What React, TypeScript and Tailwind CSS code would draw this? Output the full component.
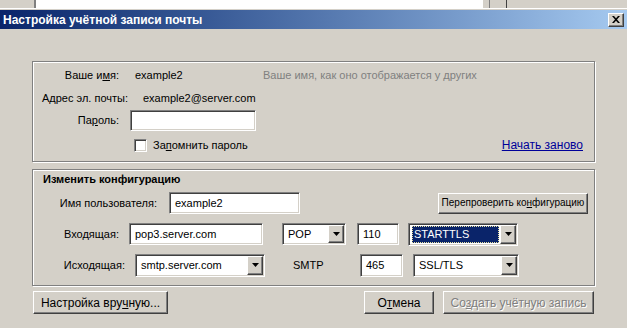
import React from "react";

// Win2000-style bevels
const sunken =
  "border border-t-[#808080] border-l-[#808080] border-b-white border-r-white shadow-[inset_1px_1px_0_#404040,inset_-1px_-1px_0_#d4d0c8] bg-white";
const raised =
  "border border-t-white border-l-white border-b-[#404040] border-r-[#404040] shadow-[inset_-1px_-1px_0_#808080,inset_1px_1px_0_#d4d0c8] bg-[#d4d0c8]";
const etched = "border border-[#808080] shadow-[inset_1px_1px_0_#fff,1px_1px_0_#fff]";

function Arrow() {
  return (
    <div className={`${raised} w-[16px] h-full flex items-center justify-center shrink-0`}>
      <svg width="7" height="4" viewBox="0 0 7 4">
        <path d="M0 0h7L3.5 4z" fill="#000" />
      </svg>
    </div>
  );
}

function Select({
  value,
  className,
  selected,
}: {
  value: string;
  className: string;
  selected?: boolean;
}) {
  return (
    <div className={`${sunken} ${className} flex items-stretch p-[1px]`}>
      <div className="flex-1 flex items-center pl-[2px] pr-[1px] min-w-0">
        {selected ? (
          <div className="w-full h-[17px] bg-[#0a246a] text-white flex items-center pl-[2px] outline outline-1 outline-dotted outline-[#e8e0a0] -outline-offset-1">
            {value}
          </div>
        ) : (
          <span className="pl-[2px]">{value}</span>
        )}
      </div>
      <Arrow />
    </div>
  );
}

function Input({ value, className }: { value?: string; className: string }) {
  return (
    <div className={`${sunken} ${className} flex items-center pl-[5px]`}>
      {value}
    </div>
  );
}

export default function App() {
  return (
    <div className="w-[627px] h-[328px] overflow-hidden bg-[#d4d0c8] font-['Liberation_Sans',Arial,sans-serif] text-[11px] text-black leading-none">
      {/* window behind */}
      <div className="h-[8px] flex">
        <div className="w-[34px]" />
        <div className="w-[2px] bg-[#808080]" />
        <div className="w-[447px] bg-white" />
        <div className="w-[6px]" />
        <div className="w-[1px] bg-[#808080]" />
        <div className="w-[16px]" />
        <div className="w-[1px] bg-[#404040]" />
      </div>
      <div className="h-[2px] border-t border-white" />

      {/* title bar */}
      <div className="h-[19px] flex items-center pl-[3px] pr-[3px] bg-linear-to-r from-[#0a246a] to-[#a6caf0]">
        <span className="text-white font-bold text-[12px]">Настройка учётной записи почты</span>
        <div className={`${raised} ml-auto w-[16px] h-[14px] flex items-center justify-center`}>
          <svg width="8" height="7" viewBox="0 0 8 7">
            <path d="M0 0h2l2 2.3L6 0h2L5 3.5 8 7H6L4 4.7 2 7H0l3-3.5z" fill="#000" />
          </svg>
        </div>
      </div>

      {/* account box */}
      <div className={`${etched} mt-[32px] ml-[32px] w-[563px] h-[101px]`}>
        <div className="mt-[4px] h-[18px] flex items-center">
          <div className="w-[86px] text-right">
            Ваше и<u>м</u>я:
          </div>
          <div className="ml-[16px] w-[128px]">example2</div>
          <div className="text-[#808080]">Ваше имя, как оно отображается у других</div>
        </div>
        <div className="mt-[5px] h-[18px] flex items-center">
          <div className="w-[95px] text-right">
            А<u>д</u>рес эл. почты:
          </div>
          <div className="ml-[15px]">example2@server.com</div>
        </div>
        <div className="mt-[3px] h-[21px] flex items-center">
          <div className="w-[86px] text-right">
            Па<u>р</u>оль:
          </div>
          <Input className="ml-[11px] w-[126px] h-[21px]" />
        </div>
        <div className="mt-[6px] h-[16px] flex items-center">
          <div className={`${sunken} ml-[101px] w-[13px] h-[13px]`} />
          <div className="ml-[6px]">
            За<u>п</u>омнить пароль
          </div>
          <div className="ml-auto mr-[11px] text-[12px] text-[#000099] underline">Начать заново</div>
        </div>
      </div>

      {/* config box */}
      <div className={`${etched} mt-[7px] ml-[32px] w-[563px] h-[117px]`}>
        <div className="mt-[1px] h-[16px] flex items-center pl-[10px] font-bold">
          Изменить конфигурацию
        </div>
        <div className="mt-[5px] h-[22px] flex items-center">
          <div className="w-[124px] text-right">Имя пользователя:</div>
          <Input value="example2" className="ml-[12px] w-[131px] h-[22px]" />
          <div
            className={`${raised} ml-[138px] w-[150px] h-[21px] flex items-center justify-center whitespace-nowrap text-[10px]`}
          >
            <span>
              Перепроверить ко<u>н</u>фигурацию
            </span>
          </div>
        </div>
        <div className="mt-[8px] h-[24px] flex items-center">
          <div className="w-[86px] text-right">Входящая:</div>
          <Input value="pop3.server.com" className="ml-[10px] w-[134px] h-[22px]" />
          <Select value="POP" className="ml-[19px] w-[64px] h-[22px]" />
          <Input value="110" className="ml-[11px] w-[42px] h-[22px]" />
          <Select value="STARTTLS" selected className="ml-[9px] w-[110px] h-[23px]" />
        </div>
        <div className="mt-[7px] h-[24px] flex items-center">
          <div className="w-[92px] text-right">Исходящая:</div>
          <Select value="smtp.server.com" className="ml-[10px] w-[130px] h-[23px]" />
          <div className="ml-[28px] w-[67px]">SMTP</div>
          <Input value="465" className="w-[43px] h-[23px]" />
          <Select value="SSL/TLS" className="ml-[10px] w-[106px] h-[23px]" />
        </div>
      </div>

      {/* bottom buttons */}
      <div className="mt-[5px] flex text-[12px] whitespace-nowrap">
        <div className={`${raised} ml-[33px] w-[135px] h-[23px] flex items-center justify-center`}>
          <span>
            Настройка вру<u>ч</u>ную...
          </span>
        </div>
        <div className={`${raised} ml-[196px] w-[70px] h-[23px] flex items-center justify-center`}>
          <span>
            О<u>т</u>мена
          </span>
        </div>
        <div
          className={`${raised} ml-[9px] w-[151px] h-[23px] flex items-center justify-center text-[#808080] [text-shadow:1px_1px_0_#fff]`}
        >
          <span>
            Со<u>з</u>дать учётную запись
          </span>
        </div>
      </div>
    </div>
  );
}
